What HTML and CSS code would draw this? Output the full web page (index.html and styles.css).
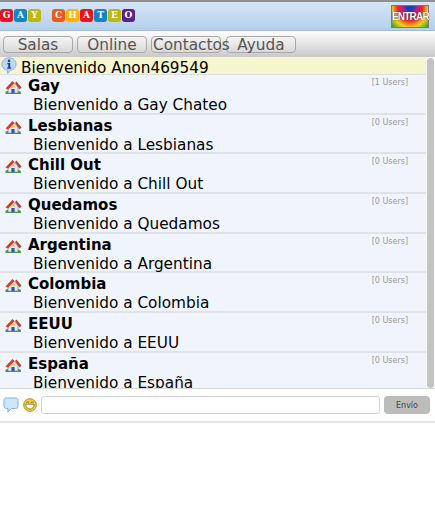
FILE: index.html
```html
<!DOCTYPE html>
<html lang="es">
<head>
    <meta charset="UTF-8">
    <meta name="viewport" content="width=device-width, initial-scale=1.0">
    <title>Gay Chateo</title>
    <link rel="stylesheet" href="styles.css">
</head>
<body>
    <svg width="0" height="0" class="defs">
        <symbol id="house" viewBox="0 0 18 15">
            <path d="M1.5 14 C1 12 2 11 3.5 11 H14.5 C16 11 17.5 12 17 14 Z" fill="#4b9a3c"/>
            <path d="M4 13 V7 L9 2.5 L14 7 V13 Z" fill="#e4e8f2" stroke="#6b7aa0" stroke-width="0.6"/>
            <path d="M7.4 13 V9 H10.6 V13 Z" fill="#2f55b8"/>
            <path d="M1.5 8.5 L8.5 1 L10.5 3 L4 9.5 Z" fill="#d63a24"/>
            <path d="M11 3 L12.5 1.5 L17.5 7.5 L15.5 9.5 Z" fill="#b4472c"/>
            <path d="M6 7.5 L9 5 L12 7.5 Z" fill="#f0c23a"/>
        </symbol>
    </svg>

    <header class="top">
        <div class="logo">
            <span class="tile red">G</span><span class="tile blue">A</span><span class="tile olive">Y</span>
            <span class="gap"></span>
            <span class="tile orange">C</span><span class="tile yellow">H</span><span class="tile red">A</span><span class="tile blue">T</span><span class="tile olive">E</span><span class="tile purple">O</span>
        </div>
        <a class="enter">ENTRAR</a>
    </header>

    <nav class="tabs">
        <button class="tab">Salas</button>
        <button class="tab">Online</button>
        <button class="tab tab-tight">Contactos</button>
        <button class="tab">Ayuda</button>
    </nav>

    <div class="main">
        <div class="content">
            <div class="welcome">
                <svg class="info" viewBox="0 0 16 17" width="16" height="17">
                    <path d="M8 .8 C12 .8 15.2 3.6 15.2 7.2 C15.2 10.4 12.6 12.8 9.6 13.3 L6.5 16.4 L6.6 13.4 C3.3 12.9 .8 10.4 .8 7.2 C.8 3.6 4 .8 8 .8 Z" fill="#bcd8f5" stroke="#7fa8d8" stroke-width="0.8"/>
                    <circle cx="8" cy="3.9" r="1.3" fill="#23408f"/>
                    <path d="M6.3 6 H9.2 V10.6 H10.2 V11.8 H6.2 V10.6 H7.2 V7.2 H6.3 Z" fill="#23408f"/>
                </svg>
                <span>Bienvenido Anon469549</span>
            </div>
            <ul class="rooms">
                <li class="room">
                    <svg class="house"><use href="#house"/></svg>
                    <div class="room-text">
                        <strong>Gay</strong>
                        <p>Bienvenido a Gay Chateo</p>
                    </div>
                    <span class="users">[1 Users]</span>
                </li>
                <li class="room">
                    <svg class="house"><use href="#house"/></svg>
                    <div class="room-text">
                        <strong>Lesbianas</strong>
                        <p>Bienvenido a Lesbianas</p>
                    </div>
                    <span class="users">[0 Users]</span>
                </li>
                <li class="room">
                    <svg class="house"><use href="#house"/></svg>
                    <div class="room-text">
                        <strong>Chill Out</strong>
                        <p>Bienvenido a Chill Out</p>
                    </div>
                    <span class="users">[0 Users]</span>
                </li>
                <li class="room">
                    <svg class="house"><use href="#house"/></svg>
                    <div class="room-text">
                        <strong>Quedamos</strong>
                        <p>Bienvenido a Quedamos</p>
                    </div>
                    <span class="users">[0 Users]</span>
                </li>
                <li class="room">
                    <svg class="house"><use href="#house"/></svg>
                    <div class="room-text">
                        <strong>Argentina</strong>
                        <p>Bienvenido a Argentina</p>
                    </div>
                    <span class="users">[0 Users]</span>
                </li>
                <li class="room">
                    <svg class="house"><use href="#house"/></svg>
                    <div class="room-text">
                        <strong>Colombia</strong>
                        <p>Bienvenido a Colombia</p>
                    </div>
                    <span class="users">[0 Users]</span>
                </li>
                <li class="room">
                    <svg class="house"><use href="#house"/></svg>
                    <div class="room-text">
                        <strong>EEUU</strong>
                        <p>Bienvenido a EEUU</p>
                    </div>
                    <span class="users">[0 Users]</span>
                </li>
                <li class="room">
                    <svg class="house"><use href="#house"/></svg>
                    <div class="room-text">
                        <strong>España</strong>
                        <p>Bienvenido a España</p>
                    </div>
                    <span class="users">[0 Users]</span>
                </li>
            </ul>
        </div>
        <div class="scrollbar"><div class="thumb"></div></div>
    </div>

    <footer class="composer">
        <svg class="bubble" viewBox="0 0 16 16" width="16" height="16">
            <path d="M3.5 1 H12.5 C14 1 15 2 15 3.5 V9 C15 10.5 14 11.5 12.5 11.5 H8.5 L4.8 15 L5 11.5 H3.5 C2 11.5 1 10.5 1 9 V3.5 C1 2 2 1 3.5 1 Z" fill="#cfe6fa" stroke="#74b4e6" stroke-width="1"/>
        </svg>
        <svg class="smile" viewBox="0 0 14 14" width="14" height="14">
            <circle cx="7" cy="7" r="6.3" fill="#f2cf45" stroke="#a3841e" stroke-width="0.9"/>
            <path d="M2.8 6.2 H11.2 C11.2 9.4 9.4 11 7 11 C4.6 11 2.8 9.4 2.8 6.2 Z" fill="#fff" stroke="#7a6212" stroke-width="0.7"/>
            <path d="M3.4 4.6 Q4.8 3.2 6 4.6 M8 4.6 Q9.2 3.2 10.6 4.6" fill="none" stroke="#6b5510" stroke-width="0.8"/>
        </svg>
        <input class="message" type="text">
        <button class="send">Envío</button>
    </footer>
</body>
</html>
```

FILE: styles.css
```css
body {
    margin: 0;
    font-family: "DejaVu Sans", sans-serif;
    background-color: #fff;
    color: #000;
}
.defs {
    display: block;
    height: 0;
}
.top {
    height: 28px;
    border-top: 2px solid #8f8f8f;
    border-bottom: 1px solid #9dbbdc;
    background: linear-gradient(#d6e6f8, #b4cfec);
    display: flex;
    align-items: center;
    justify-content: space-between;
    padding: 0 6px 0 0;
}
.logo {
    display: flex;
    margin-top: -1px;
}
.tile {
    width: 13px;
    height: 13px;
    border-radius: 3px;
    margin-right: 1px;
    color: #fff;
    font-family: "DejaVu Serif", serif;
    font-size: 9px;
    font-weight: bold;
    line-height: 13px;
    text-align: center;
}
.gap {
    width: 10px;
}
.red { background-color: #e8141c; }
.blue { background-color: #1285c6; }
.olive { background-color: #bcb80e; }
.orange { background-color: #f2581a; }
.yellow { background-color: #fcb30a; }
.purple { background-color: #5a1f8c; }
.enter {
    width: 38px;
    height: 23px;
    box-sizing: border-box;
    border: 1px solid #7a7a7a;
    background: radial-gradient(ellipse at 50% 0, #1a3fb0 12%, #c81f7c 32%, #e8222a 48%, #f2d21a 72%, #2f9a3a 100%);
    color: #fff;
    font-family: "Liberation Sans", sans-serif;
    font-size: 10px;
    font-weight: bold;
    line-height: 21px;
    text-align: center;
    letter-spacing: -0.8px;
    white-space: nowrap;
    text-shadow: 0 0 1px #000;
}
.tabs {
    height: 26px;
    box-sizing: border-box;
    background: linear-gradient(#fff, #c9c9c9);
    display: flex;
    gap: 4px;
    padding: 5px 0 0 3px;
}
.tab {
    width: 70px;
    height: 17px;
    padding: 1px 0 0;
    border: 1px solid #a8a8a8;
    border-radius: 4px;
    background: linear-gradient(#f5f5f5, #d8d8d8);
    color: #555;
    font-family: "DejaVu Sans", sans-serif;
    font-size: 15.3px;
    line-height: 15px;
    white-space: nowrap;
}
.tab-tight {
    margin-right: 1px;
    padding-left: 1px;
    text-align: left;
    position: relative;
    z-index: 1;
}
.main {
    display: flex;
    height: 331px;
}
.content {
    width: 426px;
    overflow: hidden;
}
.welcome {
    height: 17px;
    background-color: #f5f5ce;
    border-bottom: 1px solid #dcdfe2;
    display: flex;
    font-size: 15.3px;
    line-height: 23px;
    white-space: nowrap;
}
.info {
    margin: 0 4px 0 1px;
    flex: none;
}
.rooms {
    list-style: none;
    margin: 0;
    padding: 0;
}
.room {
    height: 37.7px;
    background-color: #f0f5fd;
    border-bottom: 2px solid #dfe2e6;
    display: flex;
    position: relative;
}
.house {
    width: 18px;
    height: 15px;
    margin: 5px 6px 0 4px;
    flex: none;
}
.room-text strong {
    display: block;
    font-size: 15px;
    line-height: 20px;
    padding-top: 1px;
}
.room-text p {
    margin: -1px 0 0 5px;
    font-size: 15.3px;
    line-height: 20px;
    white-space: nowrap;
}
.users {
    position: absolute;
    top: 2px;
    right: 18px;
    font-size: 8px;
    line-height: 12px;
    color: #999;
}
.scrollbar {
    width: 9px;
    background-color: #fff;
    padding-top: 1px;
}
.thumb {
    width: 7px;
    margin-left: 1px;
    height: 330px;
    border-radius: 4px;
    background-color: #c4c4c4;
}
.composer {
    height: 35px;
    box-sizing: border-box;
    border-top: 1px solid #d8d8d8;
    border-bottom: 2px solid #e4e4e4;
    display: flex;
    align-items: center;
    padding: 0 5px 0 3px;
}
.bubble {
    flex: none;
    margin-right: 4px;
}
.smile {
    flex: none;
    margin-right: 4px;
}
.message {
    width: 339px;
    height: 18px;
    box-sizing: border-box;
    border: 1px solid #d4d4d4;
    border-radius: 3px;
    padding: 0;
    margin-right: 4px;
    background-color: #fff;
}
.send {
    width: 46px;
    height: 18px;
    padding: 0;
    border: 0;
    border-radius: 4px;
    background-color: #bcbcbc;
    color: #444;
    font-family: "DejaVu Sans", sans-serif;
    font-size: 8px;
}
```
